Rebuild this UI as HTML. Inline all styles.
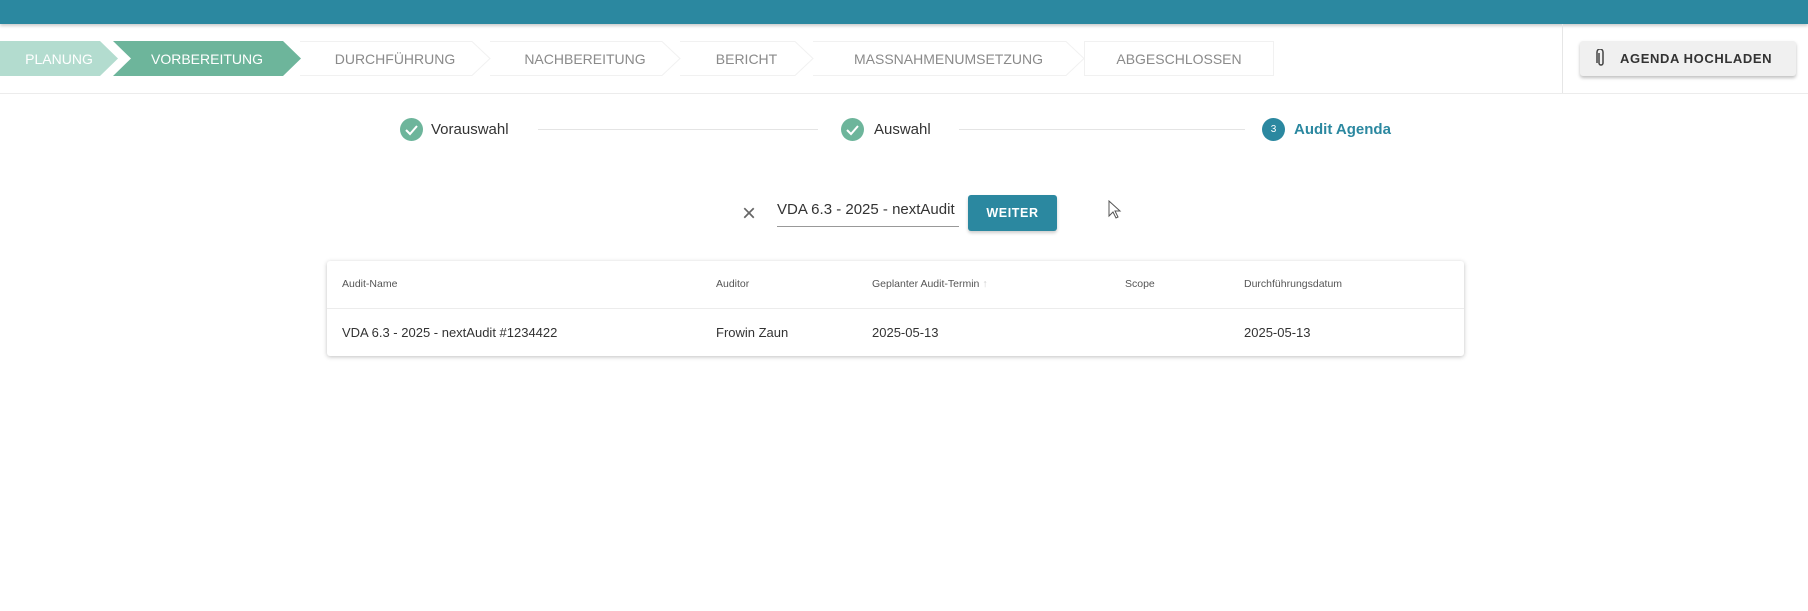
<!DOCTYPE html>
<html><head><meta charset="utf-8"><style>
*{margin:0;padding:0;box-sizing:border-box}
body{width:1808px;height:611px;background:#fff;font-family:"Liberation Sans",sans-serif;position:relative;overflow:hidden}
.top{position:absolute;left:0;top:0;width:1808px;height:24px;background:#2b88a0;box-shadow:0 2px 3px rgba(0,0,0,.2)}
.chev{position:absolute;top:41px;height:35px;display:flex;align-items:center;justify-content:center;font-size:14px;color:#8a8a8a;letter-spacing:0}
.chev.g{clip-path:polygon(0 0,calc(100% - 18px) 0,100% 50%,calc(100% - 18px) 100%,0 100%,18px 50%)}
.w{border:1px solid #f1f1f1;background:#fff}
.abs{position:absolute}
.check{position:absolute;width:23px;height:23px;border-radius:50%;background:#6db59b}
.lbl{position:absolute;font-size:15px;color:#333}
.line{position:absolute;height:1px;background:#e4e4e4;top:129px}
.th{position:absolute;top:278px;font-size:10.5px;color:#555}
.td{position:absolute;top:325px;font-size:13px;color:#333}
</style></head><body>
<div class="top"></div>
<div class="chev g" style="left:-18px;width:136px;background:#b3dccf;color:#fff;padding-left:18px">PLANUNG</div>
<div class="chev g" style="left:113px;width:188px;background:#6db59b;color:#fff">VORBEREITUNG</div>
<svg class="abs" style="left:300px;top:41px" width="980" height="35"><g fill="none" stroke="#f1f1f1"><path d="M0 .5H172L190 17.5 172 34.5H0"/><path d="M190 .5H362L380 17.5 362 34.5H190"/><path d="M380 .5H495L513 17.5 495 34.5H380"/><path d="M513 .5H766L784 17.5 766 34.5H513"/></g></svg>
<div class="chev" style="left:300px;width:190px">DURCHFÜHRUNG</div>
<div class="chev" style="left:490px;width:190px">NACHBEREITUNG</div>
<div class="chev" style="left:680px;width:133px">BERICHT</div>
<div class="chev" style="left:813px;width:271px">MASSNAHMENUMSETZUNG</div>
<div class="chev w" style="left:1084px;width:190px">ABGESCHLOSSEN</div>
<div class="abs" style="left:1562px;top:24px;width:1px;height:69px;background:#e6e6e6"></div>
<div class="abs" style="left:0;top:93px;width:1808px;height:1px;background:#ececec"></div>
<div class="abs" style="left:1580px;top:41px;width:216px;height:35px;background:#f0f0f0;border-radius:3px;box-shadow:0 2px 3px rgba(0,0,0,.25);font-size:13px;font-weight:bold;color:#333;letter-spacing:.6px;display:flex;align-items:center;padding-left:40px">AGENDA HOCHLADEN</div>
<svg class="abs" style="left:1596px;top:49px" width="10" height="18" viewBox="0 0 10 18"><path d="M3 4v10a2 2 0 0 0 4 0V3a3 3 0 0 0-6 0v11" fill="none" stroke="#444" stroke-width="1.5"/></svg>

<div class="check" style="left:400px;top:118px"></div>
<svg class="abs" style="left:400px;top:118px" width="23" height="23"><path d="M6 12l4 4 7-8" fill="none" stroke="#fff" stroke-width="2"/></svg>
<div class="lbl" style="left:431px;top:121px">Vorauswahl</div>
<div class="line" style="left:538px;width:280px"></div>
<div class="check" style="left:841px;top:118px"></div>
<svg class="abs" style="left:841px;top:118px" width="23" height="23"><path d="M6 12l4 4 7-8" fill="none" stroke="#fff" stroke-width="2"/></svg>
<div class="lbl" style="left:874px;top:121px">Auswahl</div>
<div class="line" style="left:959px;width:286px"></div>
<div class="check" style="left:1262px;top:118px;background:#2b88a0;color:#fff;font-size:10px;display:flex;align-items:center;justify-content:center">3</div>
<div class="lbl" style="left:1294px;top:121px;color:#2b88a0;font-weight:bold">Audit Agenda</div>

<div class="abs" style="left:742px;top:200px;font-size:24px;color:#666;font-weight:300">×</div>
<div class="abs" style="left:777px;top:201px;width:182px;font-size:15px;color:#333;border-bottom:1px solid #999;padding-bottom:8px;overflow:hidden;white-space:nowrap">VDA 6.3 - 2025 - nextAudit</div>
<div class="abs" style="left:968px;top:195px;width:89px;height:36px;background:#2b88a0;border-radius:3px;color:#fff;font-size:12.5px;font-weight:bold;letter-spacing:.6px;display:flex;align-items:center;justify-content:center;box-shadow:0 2px 3px rgba(0,0,0,.2)">WEITER</div>
<svg class="abs" style="left:1108px;top:200px" width="14" height="20"><path d="M1 1v15l4-4 3 6 2-1-3-6h5z" fill="#fff" stroke="#555"/></svg>

<div class="abs" style="left:327px;top:261px;width:1137px;height:95px;background:#fff;border-radius:3px;box-shadow:0 1px 4px rgba(0,0,0,.25)"></div>
<div class="abs" style="left:327px;top:308px;width:1137px;height:1px;background:#ececec"></div>
<div class="th" style="left:342px">Audit-Name</div>
<div class="th" style="left:716px">Auditor</div>
<div class="th" style="left:872px">Geplanter Audit-Termin <span style="color:#ccc">↑</span></div>
<div class="th" style="left:1125px">Scope</div>
<div class="th" style="left:1244px">Durchführungsdatum</div>
<div class="td" style="left:342px">VDA 6.3 - 2025 - nextAudit #1234422</div>
<div class="td" style="left:716px">Frowin Zaun</div>
<div class="td" style="left:872px">2025-05-13</div>
<div class="td" style="left:1244px">2025-05-13</div>
</body></html>
